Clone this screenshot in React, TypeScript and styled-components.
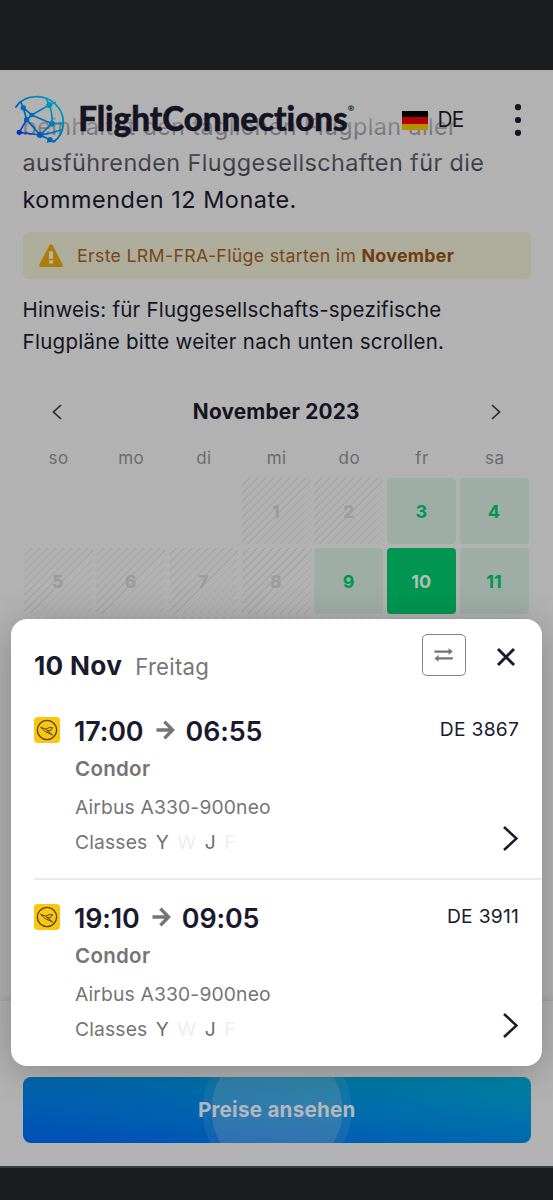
import React from "react";
import styled, { createGlobalStyle } from "styled-components";

const GlobalStyle = createGlobalStyle`
  * { box-sizing: border-box; }
  body { margin: 0; background: #1b1d1e; }
  button { border: 0; padding: 0; margin: 0; background: none; font: inherit; color: inherit; }
`;

const Screen = styled.div`
  position: relative;
  width: 553px;
  height: 1200px;
  overflow: hidden;
  display: flex;
  flex-direction: column;
  background: #1b1d1e;
  color: #141423;
  font-family: Inter, "Liberation Sans", sans-serif;
`;

const Page = styled.main`
  position: relative;
  flex: none;
  height: 1098px;
  margin-top: 70px;
  padding: 38.6px 22.5px 0;
  overflow: hidden;
  display: flex;
  flex-direction: column;
  background: #b2b2b2;
  border-bottom: 2px solid #343b40;
`;

const Intro = styled.p`
  margin: 0;
  height: 109.5px;
  font-size: 23.4px;
  line-height: 36.5px;
  white-space: nowrap;
`;

const Line = styled.span<{ $spacing: number }>`
  display: block;
  letter-spacing: ${(p) => p.$spacing}px;
`;

const Header = styled.header`
  position: absolute;
  top: 70px;
  left: 0;
  width: 553px;
  height: 120px;
  padding: 0 0 21px 15px;
  display: flex;
  align-items: center;
  background: linear-gradient(#b2b2b2 0 28px, rgba(178, 178, 178, 0) 120px);

  > * { flex: none; }
`;

const Brand = styled.div`
  margin: -4px 0 0 13.2px;
  font-family: Lato, sans-serif;
  font-weight: 900;
  font-size: 33.2px;
  line-height: 40px;
  letter-spacing: -0.05px;
  font-variant-ligatures: none;
  -webkit-text-stroke: 0.5px #141423;
  display: flex;
  width: 323.8px;
`;

const Registered = styled.span`
  font-size: 8px;
  line-height: 20px;
  font-weight: 700;
  -webkit-text-stroke: 0;
`;

const Language = styled.div`
  display: flex;
  align-items: center;
  gap: 9.5px;
  font-size: 20.8px;
  width: 112px;
  letter-spacing: -0.8px;
`;

const Flag = styled.div`
  width: 26px;
  height: 19px;
  margin-top: 2px;
  background: linear-gradient(#000 0 33%, #b40000 33% 67%, #b49000 67%);
`;

const Alert = styled.div`
  margin-top: 13.9px;
  height: 47.5px;
  padding-left: 15.5px;
  border-radius: 6px;
  background: #aeac9b;
  color: #78461a;
  display: flex;
  align-items: center;
  gap: 13px;
  font-size: 17.8px;
  letter-spacing: 0.29px;

  b { font-weight: 700; color: #6e3c10; }
`;

const Note = styled.p`
  margin: 14.5px 0 0;
  font-size: 20.5px;
  line-height: 31.8px;
  white-space: nowrap;
`;

const MonthBar = styled.div`
  margin-top: 34px;
  height: 40px;
  padding: 0 29.5px 0 29px;
  display: flex;
  align-items: center;
  justify-content: space-between;
  font-size: 20.8px;
  font-weight: 700;
  letter-spacing: 0.2px;
`;

const WeekGrid = styled.div`
  width: 505.3px;
  margin-left: 1px;
  display: grid;
  grid-template-columns: repeat(7, 1fr);
  column-gap: 3.5px;
  row-gap: 4px;
`;

const Weekday = styled.div`
  height: 42.5px;
  padding: 16.2px 0 0 1px;
  text-align: center;
  font-size: 17px;
  line-height: 21px;
  letter-spacing: 0.5px;
  color: #6b6b6d;
`;

type DayKind = "empty" | "off" | "open" | "selected";

const dayFill: Record<DayKind, string> = {
  empty: "none",
  off: "repeating-linear-gradient(135deg, #b2b2b2 0 4.6px, #a5a5a5 4.6px 5.7px)",
  open: "#9eaea7",
  selected: "#009650",
};

const dayInk: Record<DayKind, string> = {
  empty: "transparent",
  off: "#9b9b9b",
  open: "#009650",
  selected: "#b4beb8",
};

const Day = styled.div<{ $kind: DayKind }>`
  height: 66px;
  padding-right: 0.5px;
  display: flex;
  align-items: center;
  justify-content: center;
  border-radius: ${(p) => (p.$kind === "off" ? 0 : 4)}px;
  background: ${(p) => dayFill[p.$kind]};
  color: ${(p) => dayInk[p.$kind]};
  font-size: 18px;
  font-weight: 700;
`;

const ActionBar = styled.div`
  position: absolute;
  left: 0;
  right: 0;
  bottom: 0;
  height: 165px;
  padding: 76px 22px 0 22.5px;
  background: #b2b2b2;
  box-shadow: 0 -2px 8px rgba(0, 0, 0, 0.1);
`;

const PriceButton = styled.button`
  display: block;
  width: 508.5px;
  height: 66px;
  padding-bottom: 2px;
  border-radius: 8px;
  color: #b4b8bc;
  font-size: 20.6px;
  font-weight: 700;
  letter-spacing: 0.25px;
  background:
    radial-gradient(circle at 50% 50%, rgba(178, 178, 178, 0.27) 0 65px, rgba(178, 178, 178, 0.1) 65.8px 74px, transparent 74.8px),
    linear-gradient(to top right, #004eb6, #0068ae 50%, #0085a4);
`;

const Card = styled.section`
  position: absolute;
  left: 11.4px;
  top: 619px;
  width: 530.8px;
  height: 446.5px;
  padding-left: 22.6px;
  border-radius: 16px;
  background: #fff;
  box-shadow: 0 6px 38px rgba(0, 0, 0, 0.24);
  color: #1a1a2e;
`;

const CardHead = styled.div`
  height: 77px;
  padding: 15px 26.4px 0 0;
  display: flex;
  align-items: flex-start;
`;

const DateLine = styled.div`
  flex: 1;
  display: flex;
  align-items: baseline;
  gap: 13px;
  padding-top: 14.8px;
  line-height: 34px;
  font-size: 26.2px;
  font-weight: 700;
  letter-spacing: 0.3px;

  span { font-size: 22.2px; font-weight: 400; color: #777; letter-spacing: 0.25px; }
`;

const SwapButton = styled.button`
  width: 44px;
  height: 42px;
  margin-right: 30px;
  border: 1px solid #858585;
  border-radius: 5px;
  display: flex;
  align-items: center;
  justify-content: center;
`;

const CloseButton = styled.button`
  width: 20px;
  height: 20px;
  margin-top: 13px;
  display: flex;
`;

const Flight = styled.article<{ $divided?: boolean }>`
  height: 187px;
  padding: 16px 23px 0 0;
  display: flex;
  align-items: flex-start;
  ${(p) => p.$divided && "background: linear-gradient(#e9e9e9, #e9e9e9) 0 182px / 100% 2px no-repeat;"}
`;

const AirlineBadge = styled.div`
  width: 26px;
  height: 26px;
  margin: 5px 14px 0 0;
  border-radius: 4px;
  background: #fdc60b;
  display: flex;
`;

const FlightBody = styled.div`
  flex: 1;
  padding-top: 1px;
  color: #757575;
`;

const Times = styled.div`
  height: 36px;
  display: flex;
  align-items: center;
  font-size: 26.9px;
  font-weight: 600;
  letter-spacing: -0.1px;
  color: #1a1a2e;

  svg { margin: -3px 11px 0 12px; }
`;

const Airline = styled.div`
  padding: 7px 0 0 1px;
  line-height: 25px;
  font-size: 20.5px;
  font-weight: 600;
  letter-spacing: 0.3px;
`;

const Detail = styled.div<{ $gap: number }>`
  padding: ${(p) => p.$gap}px 0 0 1px;
  line-height: 25px;
  font-size: 19.3px;
  letter-spacing: 0.15px;
  display: flex;
`;

const FareClass = styled.span<{ $off?: boolean }>`
  margin-left: 8.3px;
  color: ${(p) => (p.$off ? "#eeeeee" : "#6f6f6f")};
`;

const FlightSide = styled.div`
  height: 138.5px;
  display: flex;
  flex-direction: column;
  align-items: flex-end;
  justify-content: space-between;
  font-size: 19.3px;
  line-height: 34px;
  letter-spacing: 0.25px;

  svg { margin-right: 1px; }
`;

const GlobeLogo = () => (
  <svg width="50" height="50" viewBox="45 102 150 150" fill="none">
    <defs>
      <linearGradient id="globe" x1="50" y1="225" x2="165" y2="115" gradientUnits="userSpaceOnUse">
        <stop offset="0" stopColor="#002fc4" />
        <stop offset="0.45" stopColor="#0068b8" />
        <stop offset="1" stopColor="#00a2b8" />
      </linearGradient>
    </defs>
    <g stroke="url(#globe)" strokeWidth="5" strokeLinecap="round">
      <path d="M48 138C62 116 85 107 110 107C155 107 190 143 190 184C190 208 180 230 160 243" strokeWidth="5.5" />
      <path d="M62 122L70 140L80 176L58 214L120 222L80 176L95 162L70 140M95 162L148 132Q158 158 156 188L95 162M148 132L138 112M148 132L166 124M156 188L189 187M156 188L120 222L150 236M120 222Q160 216 184 206M143 243L150 236L164 241" />
    </g>
    <g fill="url(#globe)">
      <circle cx="70" cy="140" r="8" />
      <circle cx="148" cy="132" r="9" />
      <circle cx="95" cy="162" r="7" />
      <circle cx="80" cy="176" r="8" />
      <circle cx="156" cy="188" r="9" />
      <circle cx="58" cy="214" r="8" />
      <circle cx="120" cy="222" r="9" />
      <circle cx="150" cy="236" r="8" />
    </g>
  </svg>
);

const MenuDots = () => (
  <svg width="8" height="34" viewBox="0 0 8 34" fill="#141423">
    <circle cx="4" cy="4.2" r="3.1" />
    <circle cx="4" cy="17" r="3.1" />
    <circle cx="4" cy="29.8" r="3.1" />
  </svg>
);

const WarningIcon = () => (
  <svg width="26" height="24" viewBox="0 0 26 24">
    <path d="M11.4 1.2Q13 -0.6 14.6 1.2L24.6 20.6Q25.4 22.8 23 23H3Q0.6 22.8 1.4 20.6Z" fill="#ae7a08" />
    <path d="M10.9 7.3h4.2v7.5h-4.2zM10.9 16.3h4.2v3.2h-4.2z" fill="#b9b49c" />
  </svg>
);

const Chevron = ({ w, h, stroke, color, flip }: { w: number; h: number; stroke: number; color: string; flip?: boolean }) => (
  <svg width={w} height={h} viewBox={`0 0 ${w} ${h}`} fill="none">
    <path
      d={flip ? `M${w - 1} 1L1.5 ${h / 2}L${w - 1} ${h - 1}` : `M1 1L${w - 1.5} ${h / 2}L1 ${h - 1}`}
      stroke={color}
      strokeWidth={stroke}
    />
  </svg>
);

const CondorMark = () => (
  <svg width="26" height="26" viewBox="0 0 78 78" fill="none" stroke="#4d4736">
    <circle cx="39" cy="39" r="29" strokeWidth="4" />
    <path d="M20 31L36 36.5L45 32H56L48 42L37 39L56 54L34 44Z" strokeWidth="3" />
  </svg>
);

const ArrowRight = () => (
  <svg width="19" height="20" viewBox="0 0 19 20" fill="none" stroke="#757575" strokeWidth="3.4">
    <path d="M0.5 10H17M8.4 1.6L16.6 10L8.4 18.4" />
  </svg>
);

const SwapIcon = () => (
  <svg width="19" height="14" viewBox="0 0 19 14" fill="#757575">
    <path d="M0.4 2.4H14.6V0.2L18.8 3.6L14.6 7V4.8H0.4zM18.8 9.2H4.6V7L0.4 10.4L4.6 13.8V11.6H18.8z" />
  </svg>
);

const CloseIcon = () => (
  <svg width="20" height="20" viewBox="0 0 20 20" fill="none" stroke="#1a1a2e" strokeWidth="3">
    <path d="M2 2L18 18M18 2L2 18" />
  </svg>
);

const weekdays = ["so", "mo", "di", "mi", "do", "fr", "sa"];

const days: { label: string; kind: DayKind }[] = [
  ...["", "", ""].map((label) => ({ label, kind: "empty" as DayKind })),
  { label: "1", kind: "off" },
  { label: "2", kind: "off" },
  { label: "3", kind: "open" },
  { label: "4", kind: "open" },
  { label: "5", kind: "off" },
  { label: "6", kind: "off" },
  { label: "7", kind: "off" },
  { label: "8", kind: "off" },
  { label: "9", kind: "open" },
  { label: "10", kind: "selected" },
  { label: "11", kind: "open" },
  ...["off", "off", "off", "off", "off", "open", "open"].map((kind) => ({ label: "", kind: kind as DayKind })),
];

const flights = [
  { from: "17:00", to: "06:55", code: "DE 3867" },
  { from: "19:10", to: "09:05", code: "DE 3911" },
];

export default function App() {
  return (
    <Screen>
      <GlobalStyle />
      <Page>
        <Intro>
          <Line $spacing={0.38}>beinhaltet den täglichen Flugplan aller</Line>
          <Line $spacing={0.4}>ausführenden Fluggesellschaften für die</Line>
          <Line $spacing={0.55}>kommenden 12 Monate.</Line>
        </Intro>
        <Alert>
          <WarningIcon />
          <div>
            Erste LRM-FRA-Flüge starten im <b>November</b>
          </div>
        </Alert>
        <Note>
          <Line $spacing={0.2}>Hinweis: für Fluggesellschafts-spezifische</Line>
          <Line $spacing={0.28}>Flugpläne bitte weiter nach unten scrollen.</Line>
        </Note>
        <MonthBar>
          <Chevron w={10} h={16} stroke={1.7} color="#2a2a2c" flip />
          <span>November 2023</span>
          <Chevron w={10} h={16} stroke={1.7} color="#2a2a2c" />
        </MonthBar>
        <WeekGrid>
          {weekdays.map((d) => (
            <Weekday key={d}>{d}</Weekday>
          ))}
          {days.map((d, i) => (
            <Day key={i} $kind={d.kind}>
              {d.label}
            </Day>
          ))}
        </WeekGrid>
        <ActionBar>
          <PriceButton>Preise ansehen</PriceButton>
        </ActionBar>
      </Page>

      <Header>
        <GlobeLogo />
        <Brand>
          FlightConnections<Registered>®</Registered>
        </Brand>
        <Language>
          <Flag />
          DE
        </Language>
        <MenuDots />
      </Header>

      <Card>
        <CardHead>
          <DateLine>
            10 Nov <span>Freitag</span>
          </DateLine>
          <SwapButton aria-label="Richtung tauschen">
            <SwapIcon />
          </SwapButton>
          <CloseButton aria-label="Schließen">
            <CloseIcon />
          </CloseButton>
        </CardHead>
        {flights.map((f, i) => (
          <Flight key={f.code} $divided={i === 0}>
            <AirlineBadge>
              <CondorMark />
            </AirlineBadge>
            <FlightBody>
              <Times>
                {f.from}
                <ArrowRight />
                {f.to}
              </Times>
              <Airline>Condor</Airline>
              <Detail $gap={14}>Airbus A330-900neo</Detail>
              <Detail $gap={10}>
                Classes
                <FareClass>Y</FareClass>
                <FareClass $off>W</FareClass>
                <FareClass>J</FareClass>
                <FareClass $off>F</FareClass>
              </Detail>
            </FlightBody>
            <FlightSide>
              {f.code}
              <Chevron w={15} h={25} stroke={2.5} color="#1a1a2e" />
            </FlightSide>
          </Flight>
        ))}
      </Card>
    </Screen>
  );
}
